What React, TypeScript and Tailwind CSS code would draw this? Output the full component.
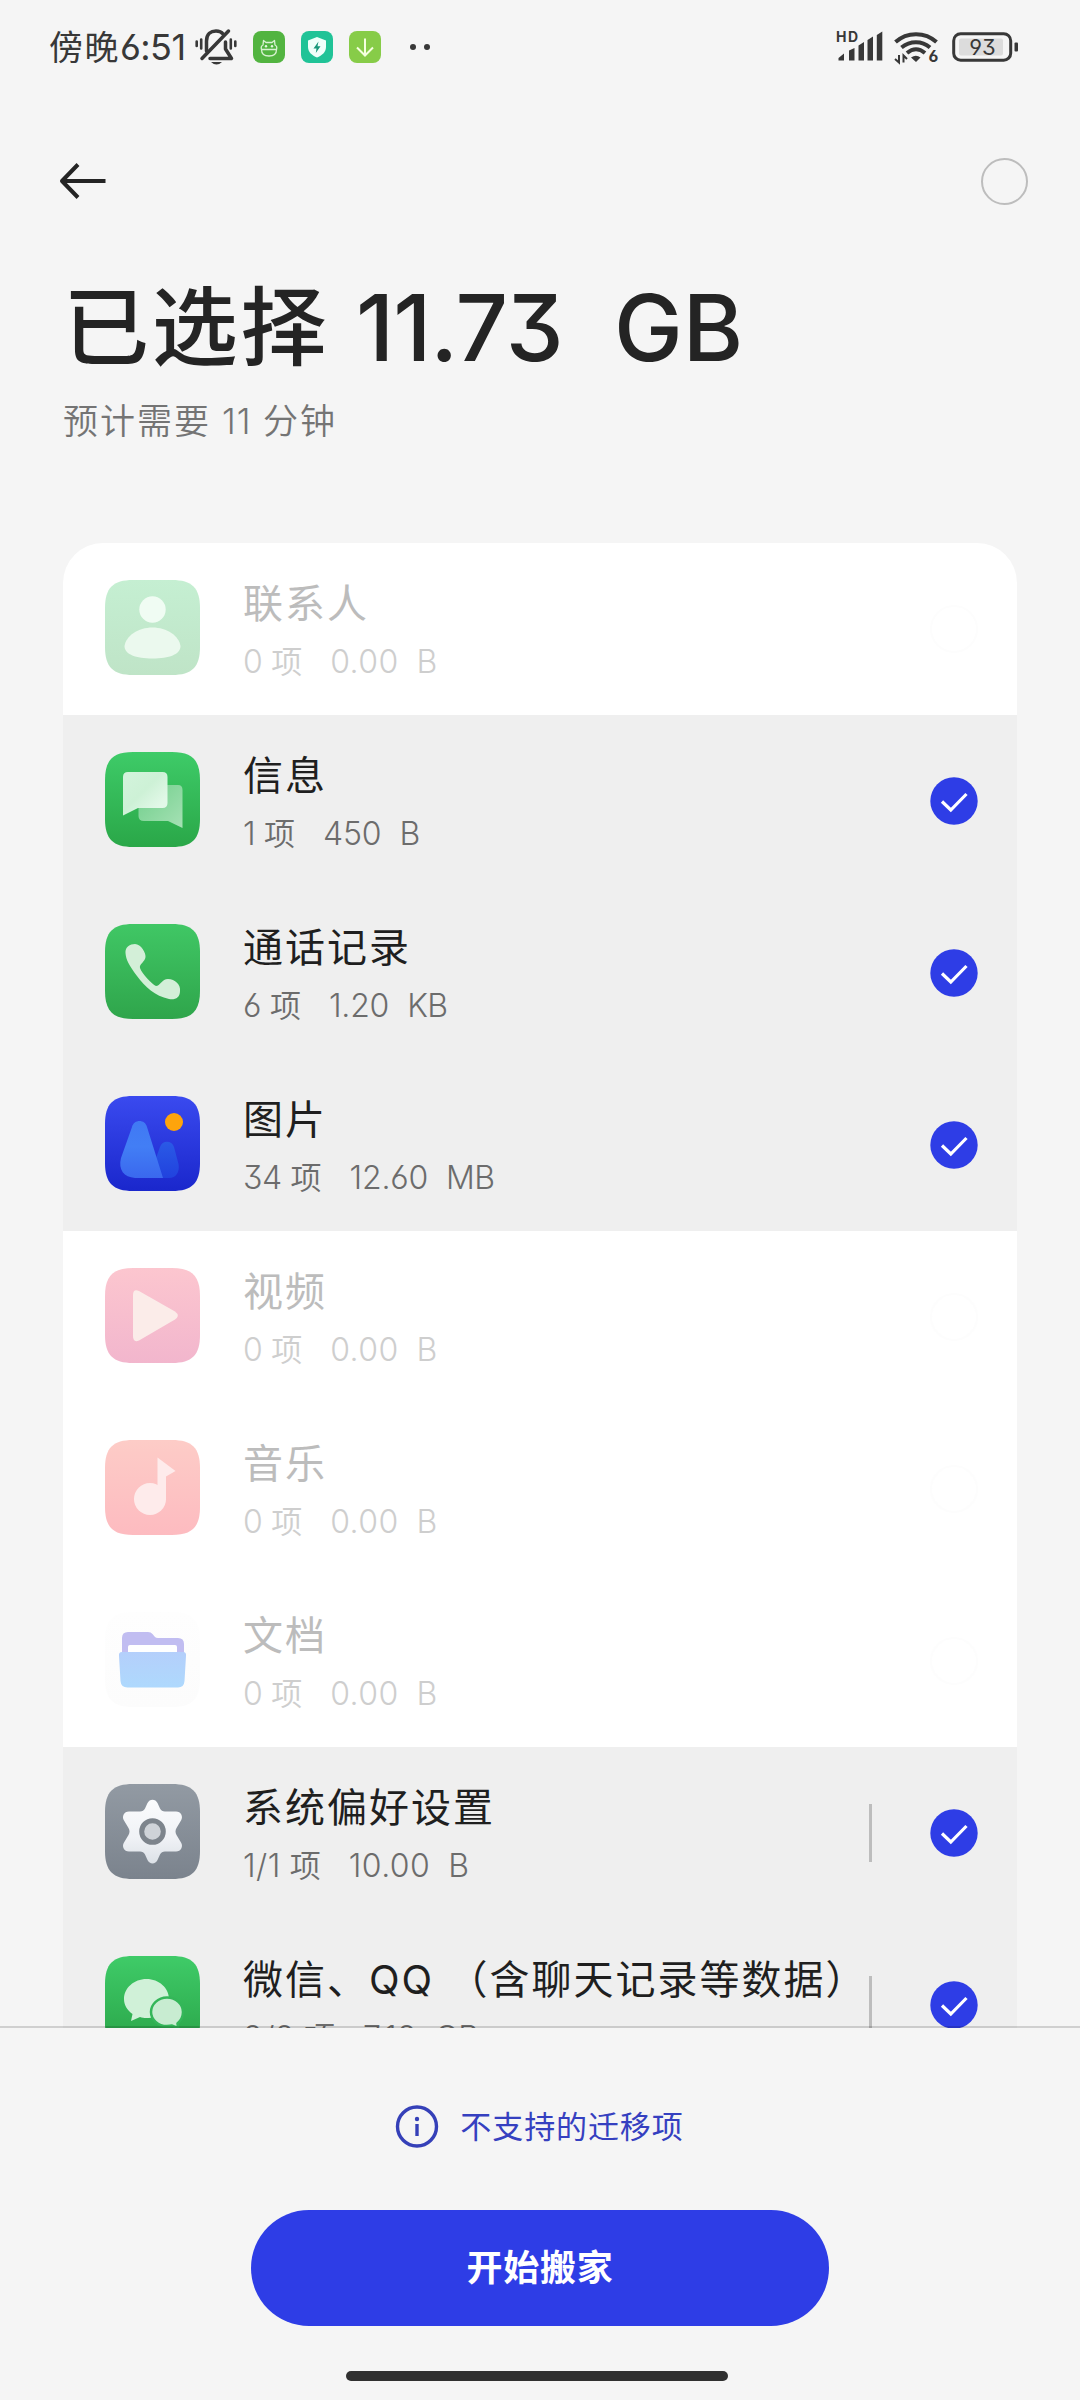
import type { ReactNode } from 'react';
import clsx from 'clsx';

type Item = {
  id: string;
  title: string;
  count: string;
  size: string;
  unit: string;
  icon: ReactNode;
  disabled?: boolean;
  hasDetail?: boolean;
};

const Tile = ({ id, from, to, children }: { id: string; from: string; to: string; children: ReactNode }) => (
  <svg viewBox="0 0 95 95" className="w-[95px] h-[95px] shrink-0">
    <defs>
      <linearGradient id={`${id}-bg`} x1="0" y1="0" x2="0" y2="1">
        <stop offset="0" stopColor={from} />
        <stop offset="1" stopColor={to} />
      </linearGradient>
    </defs>
    <path
      d="M28 0H67C87 0 95 8 95 28V67C95 87 87 95 67 95H28C8 95 0 87 0 67V28C0 8 8 0 28 0Z"
      fill={`url(#${id}-bg)`}
    />
    {children}
  </svg>
);

const ContactIcon = () => (
  <Tile id="contact" from="#c5efd2" to="#bfe4c7">
    <circle cx="47.5" cy="29.5" r="13.2" fill="#f0fcf3" />
    <path d="M19.5 66C21 56 33 47.5 47.5 47.5S74 56 75.5 66C75.5 74.5 64 78.5 47.5 78.5S19.5 74.5 19.5 66Z" fill="#ebf9ee" />
  </Tile>
);

const MessageIcon = () => (
  <Tile id="message" from="#3ecb68" to="#2aa748">
    <defs>
      <linearGradient id="bubble" x1="0" y1="0" x2="1" y2="1">
        <stop offset="0" stopColor="#d3f4dc" />
        <stop offset="0.45" stopColor="#cdf1d6" />
        <stop offset="0.8" stopColor="#e2f8e8" />
      </linearGradient>
      <linearGradient id="bubble-back" x1="0" y1="0" x2="1" y2="1">
        <stop offset="0" stopColor="#6fce8a" />
        <stop offset="1" stopColor="#a6e1b5" />
      </linearGradient>
    </defs>
    <path d="M38 33H73Q77.500 33 77.500 38V76L63 69H39Q33.500 69 33.500 64V38Q33.500 33 38 33Z" fill="url(#bubble-back)" />
    <path d="M23 20H57.500Q62.500 20 62.500 25V51Q62.500 56 57.500 56H33L18 63.500V25Q18 20 23 20Z" fill="url(#bubble)" />
  </Tile>
);

const PhoneIcon = () => (
  <Tile id="phone" from="#40c765" to="#2fa54b">
    <path
      d="M20.500 29C20 23 25 20 30 20C36 20 41 29 40.500 33C40 38 34 40 35 44C37 50 47 60 51 62C55 62 57 55 63 55C70 55 76 61 75 67C75 74 70 76 64 75C50 72 40 63 32 52C24 41 21 36 20.500 29Z"
      fill="#d3efd8"
    />
  </Tile>
);

const PictureIcon = () => (
  <Tile id="picture" from="#3a4aef" to="#1a27cc">
    <defs>
      <linearGradient id="peak" x1="0" y1="0" x2="0" y2="1">
        <stop offset="0" stopColor="#4079f4" />
        <stop offset="0.45" stopColor="#427ef5" />
        <stop offset="1" stopColor="#3a68ee" />
      </linearGradient>
      <linearGradient id="peak-small" x1="0" y1="0" x2="0" y2="1">
        <stop offset="0" stopColor="#2a5ae6" />
        <stop offset="1" stopColor="#2142de" />
      </linearGradient>
    </defs>
    <path d="M51 62L55 51C57 44 67 44 69 51L73.500 68C75 76 71 82 64 82H54Z" fill="url(#peak-small)" />
    <path d="M27 31C29 23 40 23 42 31L58 82H30C19 81 13 74 16 62Z" fill="url(#peak)" />
    <circle cx="69" cy="26" r="9" fill="#fea40c" />
  </Tile>
);

const VideoIcon = () => (
  <Tile id="video" from="#fcc6cf" to="#f2b6cd">
    <path d="M34 23L70 43.500Q75.500 47.500 70 51.500L34 72.500Q28 75 28 68V27Q28 20.500 34 23Z" fill="#fbece9" />
  </Tile>
);

const MusicIcon = () => (
  <Tile id="music" from="#fdccc7" to="#fdbbc0">
    <circle cx="45" cy="59" r="16" fill="#feebeb" />
    <path d="M52.500 17.500L70.500 31L61 36.500V60H52.500Z" fill="#feebeb" />
  </Tile>
);

const FolderIcon = () => (
  <Tile id="folder" from="#fefefe" to="#fcfcfc">
    <defs>
      <linearGradient id="front" x1="0" y1="0" x2="0" y2="1">
        <stop offset="0" stopColor="#b4cffb" />
        <stop offset="1" stopColor="#aed9fd" />
      </linearGradient>
    </defs>
    <path d="M23 20H43Q46 20 47.500 22L50 25Q51 26 53 26H73Q79 26 79 32V60H17V26Q17 20 23 20Z" fill="#c1bdf1" />
    <path d="M25 33H70Q72 33 72 35V50H23V35Q23 33 25 33Z" fill="#fff" />
    <path d="M17 40H78Q81.500 40 81 44L79.500 69Q79 75.500 73 75.500H22.500Q16 75.500 15.500 69L14 44Q13.500 40 17 40Z" fill="url(#front)" />
  </Tile>
);

const SettingsIcon = () => (
  <Tile id="settings" from="#929aa3" to="#7b838d">
    <defs>
      <linearGradient id="gear" x1="0" y1="0" x2="0" y2="1">
        <stop offset="0" stopColor="#fbfcfd" />
        <stop offset="0.6" stopColor="#f0f2f6" />
        <stop offset="1" stopColor="#dce1e7" />
      </linearGradient>
    </defs>
    <path
      d="M42.500 19C44.500 14.500 50.500 14.500 52.500 19L55 24.500Q56.500 27.500 60 27.500H71C76 27.500 78.500 32.500 76 36.500L71.500 44Q69.500 47.500 71.500 51L76 58.500C78.500 62.500 76 67.500 71 67.500H60Q56.500 67.500 55 70.500L52.500 76C50.500 80.500 44.500 80.500 42.500 76L40 70.500Q38.500 67.500 35 67.500H24C19 67.500 16.500 62.500 19 58.500L23.500 51Q25.500 47.500 23.500 44L19 36.500C16.500 32.500 19 27.500 24 27.500H35Q38.500 27.500 40 24.500Z"
      fill="url(#gear)"
    />
    <circle cx="47.500" cy="47.500" r="10.800" fill="#cfd3d8" stroke="#7d848c" strokeWidth="5" />
  </Tile>
);

const WechatIcon = () => (
  <Tile id="wechat" from="#3fcb68" to="#29a347">
    <path d="M41.500 23C54 23 64 32 64 43S54 62 41.500 62C39 62 37 61.700 35 61L26 65L27.500 58C22 54 19 49 19 43C19 32 29 23 41.500 23Z" fill="#d0f1d8" />
    <path
      d="M62 41.500C71 41.500 78 48 78 56C78 61 76 64.500 72.500 67.500L73 72L67 69.500C65.500 70 64 70 62 70C53 70 46 63.500 46 56S53 41.500 62 41.500Z"
      fill="#c8ecd1"
      stroke="#34b659"
      strokeWidth="2.5"
    />
  </Tile>
);

const items: Item[] = [
  { id: 'contacts', title: '联系人', count: '0', size: '0.00', unit: 'B', icon: <ContactIcon />, disabled: true },
  { id: 'messages', title: '信息', count: '1', size: '450', unit: 'B', icon: <MessageIcon /> },
  { id: 'calls', title: '通话记录', count: '6', size: '1.20', unit: 'KB', icon: <PhoneIcon /> },
  { id: 'pictures', title: '图片', count: '34', size: '12.60', unit: 'MB', icon: <PictureIcon /> },
  { id: 'videos', title: '视频', count: '0', size: '0.00', unit: 'B', icon: <VideoIcon />, disabled: true },
  { id: 'music', title: '音乐', count: '0', size: '0.00', unit: 'B', icon: <MusicIcon />, disabled: true },
  { id: 'docs', title: '文档', count: '0', size: '0.00', unit: 'B', icon: <FolderIcon />, disabled: true },
  { id: 'settings', title: '系统偏好设置', count: '1/1', size: '10.00', unit: 'B', icon: <SettingsIcon />, hasDetail: true },
  { id: 'apps', title: '微信、QQ （含聊天记录等数据）', count: '2/2', size: '7.12', unit: 'GB', icon: <WechatIcon />, hasDetail: true },
];

const CheckMark = () => (
  <svg viewBox="0 0 48 48" className="w-12 h-12">
    <circle cx="24" cy="24" r="23.700" fill="#2e3de6" />
    <path d="M12 24.500L20.800 33L36.500 17" fill="none" stroke="#fff" strokeWidth="3.200" />
  </svg>
);

const ItemRow = ({ item }: { item: Item }) => (
  <div className={clsx('flex h-[172px] shrink-0 pl-[42px] pr-[39px]', item.disabled ? 'bg-white' : 'bg-[#efefef]')}>
    <div className="pt-[37px]">{item.icon}</div>
    <div className="flex-1 ml-[43px] pt-[33px] whitespace-nowrap">
      <p
        className={clsx(
          'text-[40px] leading-14 tracking-[2px]',
          item.disabled ? 'text-[#bcbcbc]' : 'text-[#1f1f1f]'
        )}
      >
        {item.title}
      </p>
      <p
        className={clsx(
          'flex mt-2.5 text-[32px] leading-10 font-[350]',
          item.disabled ? 'text-[#cecece]' : 'text-[#6c6c6c]'
        )}
      >
        <span className={item.hasDetail ? 'tracking-[0.5px]' : 'tracking-[-0.5px]'}>{item.count}</span>
        <span className="ml-[9px] text-[31px]">项</span>
        <span className={clsx('ml-[28px]', item.disabled || item.hasDetail ? 'tracking-[0.4px]' : 'tracking-[-0.2px]')}>
          {item.size}
        </span>
        <span className="ml-[18px] tracking-[-0.5px]">{item.unit}</span>
      </p>
    </div>
    {item.hasDetail && <div className="w-[3px] h-[58px] mt-[57px] mr-[58px] bg-[#bdbdbd]" />}
    <div className="pt-[61.5px]">
      {item.disabled ? <div className="w-12 h-12 rounded-full border-2 border-[#fdfdfd]" /> : <CheckMark />}
    </div>
  </div>
);

const MutedBell = () => (
  <svg viewBox="0 0 42 38" className="w-[42px] h-[38px]" fill="none" stroke="#383838" strokeWidth="3" strokeLinecap="round">
    <path d="M11.500 23V13C11.500 6 16 3 21 3C24 3 26.500 4 28 6" strokeWidth="3.500" />
    <path d="M30.500 14V21L36.500 30.500H15" strokeWidth="3.500" strokeLinejoin="round" />
    <path d="M7 30.500L33.500 3" strokeWidth="3.500" />
    <path d="M16 34H27Q21.500 39 16 34Z" fill="#383838" stroke="none" />
    <path d="M1.700 13.500V18M6.200 11.500V20.500M35.800 11.500V20.500M40.300 13.500V18" strokeWidth="2.600" />
  </svg>
);

const StatusBar = () => (
  <div className="flex items-center h-[94px] pl-[49px] pr-[61px] text-[#383838]">
    <div className="flex items-center w-[146px] whitespace-nowrap">
      <span className="text-[34px] tracking-[1.5px]">傍晚</span>
      <span className="text-[36px] tracking-[-0.6px]">6:51</span>
    </div>
    <MutedBell />
    <div className="flex gap-4 ml-4">
      <svg viewBox="0 0 32 32" className="w-8 h-8">
        <rect width="32" height="32" rx="8" fill="#52b440" />
        <g fill="none" stroke="#d9f2d2" strokeWidth="1.300" strokeLinejoin="round">
          <path d="M10 14L10.500 9.500L13 11.500H19L21.500 9.500L22 14C24 15 24 17 23.500 18.500H8.500C8 17 8 15 10 14Z" />
          <path d="M8.500 18.500C8.500 23 12 25 16 25S23.500 23 23.500 18.500" />
        </g>
        <circle cx="13" cy="15.200" r="1.200" fill="#e6f8e1" />
        <circle cx="19" cy="15.200" r="1.200" fill="#e6f8e1" />
      </svg>
      <svg viewBox="0 0 32 32" className="w-8 h-8">
        <rect width="32" height="32" rx="8" fill="#20c397" />
        <path d="M16 6L25 9.500V16C25 21 21 24.500 16 26.500C11 24.500 7 21 7 16V9.500Z" fill="#effffa" />
        <path d="M17.500 10.500L12.500 17.500H15.500L14.800 22L19.500 15.200H16.500Z" fill="#18977a" />
      </svg>
      <svg viewBox="0 0 32 32" className="w-8 h-8">
        <rect width="32" height="32" rx="8" fill="#87cc48" />
        <path d="M16 7.500V24M8 16.500L16 24.500L24 16.500" fill="none" stroke="#f5ffdf" strokeWidth="2" />
      </svg>
    </div>
    <div className="flex gap-2 ml-[29px]">
      <span className="w-1.5 h-1.5 rounded-full bg-[#383838]" />
      <span className="w-1.5 h-1.5 rounded-full bg-[#383838]" />
    </div>

    <div className="flex items-center ml-auto">
      <svg viewBox="-1 -4 49 40" className="w-[49px] h-10" fill="#383838">
        <text x="0" y="11" fontSize="14" fontWeight="700" fontFamily="Inter" textLength="22">HD</text>
        <path d="M2.500 29.500V27L8 22.500V29.500ZM13 29.500V19.500L18.500 17V29.500ZM22.500 29.500V14.500L28 11V29.500ZM31.500 29.500V9L37 5.500V29.500ZM40.800 29.500V4L46.300 0.500V29.500Z" />
      </svg>
      <svg viewBox="0 -4 48 40" className="w-12 h-10 ml-[10px]" fill="none" stroke="#383838" strokeWidth="4">
        <path d="M1.500 11C13 0.500 31 0.500 42.500 11" />
        <path d="M7.500 16.500C16 9.500 28 9.500 36 16.500" />
        <path d="M13 22C19 17 25 17 31 22" />
        <path d="M17 26.500Q22 23 26.500 26.500L22 31Z" fill="#383838" stroke="none" />
        <path d="M5 24V31.500L1 28M9.500 31.500V24.500L13 28" strokeWidth="2" />
        <text x="34.500" y="31" fontSize="16" fontWeight="700" fontFamily="Inter" fill="#383838" stroke="none">6</text>
      </svg>
      <svg viewBox="0 0 68 30" className="w-[68px] h-[30px] ml-[9px]">
        <rect x="2.700" y="1.700" width="57" height="26.500" rx="7" fill="none" stroke="#383838" strokeWidth="3" />
        <rect x="8" y="6.500" width="44" height="17" rx="2" fill="#dcdcdc" />
        <rect x="63.500" y="10.500" width="3.500" height="9" rx="1" fill="#383838" />
        <text x="31.500" y="23" textAnchor="middle" fontSize="22" fontFamily="Inter" fill="#383838">93</text>
      </svg>
    </div>
  </div>
);

export default function App() {
  return (
    <div className="flex flex-col w-[1080px] h-[2400px] overflow-hidden bg-[#f5f5f5] font-['Inter','Noto_Sans_CJK_SC',sans-serif] [font-feature-settings:'cv03','cv04','cv09']">
      <StatusBar />

      <header className="flex items-center justify-between h-[174px] pl-[59px] pr-[52px]">
        <svg viewBox="0 0 48 36" className="w-12 h-9" fill="none" stroke="#242424" strokeWidth="4">
          <path d="M46.500 18H3M19 1.500L3 18L19 34.500" strokeLinejoin="round" />
        </svg>
        <div className="w-[47px] h-[47px] rounded-full border-2 border-[#bdbdbd]" />
      </header>

      <section className="h-[275px] pt-[5px] whitespace-nowrap">
        <h1 className="flex pl-[63px] text-[92px] leading-[110px] font-medium text-[#242424]">
          <span className="w-[293px] text-[86px] tracking-[2.8px]">已选择</span>
          <span className="w-[258px] tracking-[-1px]">11.73</span>
          <span>GB</span>
        </h1>
        <p className="flex mt-[15px] pl-[63px] text-[35px] leading-[46px] font-[350] tracking-[2px] text-[#747474]">
          <span className="w-[159px]">预计需要</span>
          <span className="w-[41px] tracking-[1px]">11</span>
          <span>分钟</span>
        </p>
      </section>

      <main className="flex flex-col h-[1485px] shrink-0 mx-[63px] overflow-hidden rounded-t-[40px]">
        {items.map((item) => (
          <ItemRow key={item.id} item={item} />
        ))}
      </main>

      <footer className="relative flex flex-col items-center flex-1 -mt-0.5 border-t-2 border-black/15">
        <div className="flex items-center mt-[77px] mr-px text-[#3540c0]">
          <svg viewBox="0 0 44 44" className="w-11 h-11" fill="none" stroke="#3540b8" strokeWidth="3.400">
            <circle cx="22" cy="21.500" r="19.500" />
            <path d="M22 19V31" />
            <circle cx="22" cy="14" r="2.200" fill="#3540b8" stroke="none" />
          </svg>
          <span className="ml-[21px] text-[31px] leading-11 tracking-[0.9px]">不支持的迁移项</span>
        </div>
        <button className="w-[578px] h-[116px] mt-[61px] rounded-full bg-[#2e3de6] text-[36px] font-bold tracking-[0.8px] text-white">
          开始搬家
        </button>
        <div className="w-[382px] h-2.5 mt-[45px] mr-[6px] rounded-full bg-[#303030]" />
      </footer>
    </div>
  );
}
